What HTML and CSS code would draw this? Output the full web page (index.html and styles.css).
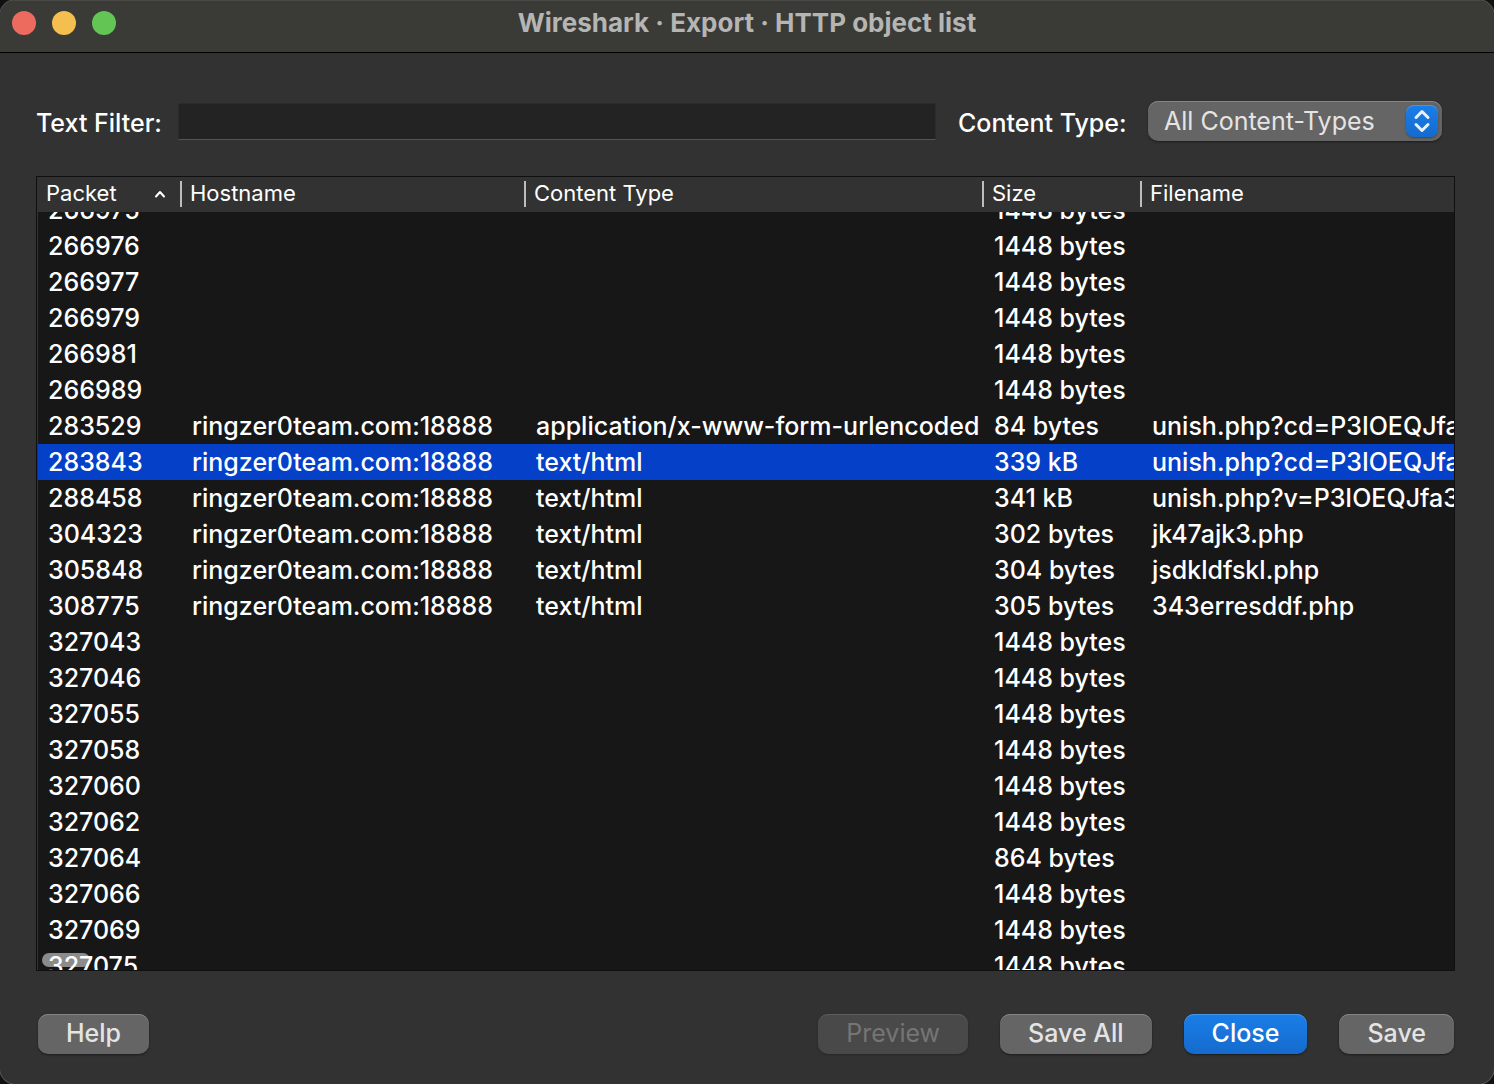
FILE: index.html
```
<!DOCTYPE html>
<html lang="en">
<head>
<meta charset="utf-8">
<title>Wireshark · Export · HTTP object list</title>
<link rel="stylesheet" href="styles.css">
</head>
<body>
<div class="window">
  <header class="titlebar">
    <div class="lights">
      <button class="light light-close" type="button" aria-label="Close window"></button>
      <button class="light light-min" type="button" aria-label="Minimize window"></button>
      <button class="light light-zoom" type="button" aria-label="Zoom window"></button>
    </div>
    <h1 class="title">Wireshark · Export · HTTP object list</h1>
  </header>
  <main class="content">
    <form class="filters">
      <label class="filter-label" for="text-filter">Text Filter:</label>
      <input class="filter-input" id="text-filter" type="text">
      <label class="type-label" for="content-type">Content Type:</label>
      <div class="select-wrap">
        <select class="select" id="content-type"><option>All Content-Types</option></select>
        <svg class="select-arrows" viewBox="0 0 32 32" aria-hidden="true">
          <path d="M10 12.500L16 6.500L22 12.500M10 19.500L16 25.500L22 19.500" fill="none" stroke="#e8f0fa" stroke-width="3" stroke-linecap="round" stroke-linejoin="round"/>
        </svg>
      </div>
    </form>
    <div class="list">
      <div class="scroller" id="scroller">
        <table class="objects">
          <colgroup><col class="col-packet"><col class="col-host"><col class="col-type"><col class="col-size"><col></colgroup>
          <thead>
            <tr>
              <th scope="col"><div class="head">Packet
                <svg class="sort" viewBox="0 0 12 8" aria-hidden="true"><path d="M2 6.500L6 2L10 6.500" fill="none" stroke="#fff" stroke-width="2" stroke-linecap="round" stroke-linejoin="round"/></svg></div></th>
              <th scope="col"><div class="head">Hostname</div></th>
              <th scope="col"><div class="head">Content Type</div></th>
              <th scope="col"><div class="head">Size</div></th>
              <th scope="col"><div class="head">Filename</div></th>
            </tr>
          </thead>
          <tbody>
            <tr><td>266975</td><td></td><td></td><td>1448 bytes</td><td></td></tr>
            <tr><td>266976</td><td></td><td></td><td>1448 bytes</td><td></td></tr>
            <tr><td>266977</td><td></td><td></td><td>1448 bytes</td><td></td></tr>
            <tr><td>266979</td><td></td><td></td><td>1448 bytes</td><td></td></tr>
            <tr><td>266981</td><td></td><td></td><td>1448 bytes</td><td></td></tr>
            <tr><td>266989</td><td></td><td></td><td>1448 bytes</td><td></td></tr>
            <tr><td>283529</td><td>ringzer0team.com:18888</td><td>application/x-www-form-urlencoded</td><td>84 bytes</td><td>unish.php?cd=P3IOEQJfa3</td></tr>
            <tr class="selected"><td>283843</td><td>ringzer0team.com:18888</td><td>text/html</td><td>339 kB</td><td>unish.php?cd=P3IOEQJfa3</td></tr>
            <tr><td>288458</td><td>ringzer0team.com:18888</td><td>text/html</td><td>341 kB</td><td>unish.php?v=P3IOEQJfa3</td></tr>
            <tr><td>304323</td><td>ringzer0team.com:18888</td><td>text/html</td><td>302 bytes</td><td>jk47ajk3.php</td></tr>
            <tr><td>305848</td><td>ringzer0team.com:18888</td><td>text/html</td><td>304 bytes</td><td>jsdkldfskl.php</td></tr>
            <tr><td>308775</td><td>ringzer0team.com:18888</td><td>text/html</td><td>305 bytes</td><td>343erresddf.php</td></tr>
            <tr><td>327043</td><td></td><td></td><td>1448 bytes</td><td></td></tr>
            <tr><td>327046</td><td></td><td></td><td>1448 bytes</td><td></td></tr>
            <tr><td>327055</td><td></td><td></td><td>1448 bytes</td><td></td></tr>
            <tr><td>327058</td><td></td><td></td><td>1448 bytes</td><td></td></tr>
            <tr><td>327060</td><td></td><td></td><td>1448 bytes</td><td></td></tr>
            <tr><td>327062</td><td></td><td></td><td>1448 bytes</td><td></td></tr>
            <tr><td>327064</td><td></td><td></td><td>864 bytes</td><td></td></tr>
            <tr><td>327066</td><td></td><td></td><td>1448 bytes</td><td></td></tr>
            <tr><td>327069</td><td></td><td></td><td>1448 bytes</td><td></td></tr>
            <tr><td>327075</td><td></td><td></td><td>1448 bytes</td><td></td></tr>
          </tbody>
        </table>
      </div>
      <div class="thumb"></div>
    </div>
    <footer class="actions">
      <button class="btn btn-help" type="button">Help</button>
      <button class="btn" type="button" disabled>Preview</button>
      <button class="btn" type="button">Save All</button>
      <button class="btn btn-primary" type="button">Close</button>
      <button class="btn" type="button">Save</button>
    </footer>
  </main>
</div>
<script src="list.js"></script>
</body>
</html>
```
FILE: list.js
```
document.getElementById("scroller").scrollTop = 20;
```
FILE: styles.css
```
* { box-sizing: border-box; }

body {
  margin: 0;
  background: #111;
  color: #fff;
  font-family: Inter, "Liberation Sans", sans-serif;
  font-size: 25px;
  font-weight: 500;
  line-height: 36px;
}

button, input, select { font: inherit; color: inherit; }

.window {
  display: flex;
  flex-direction: column;
  height: 100vh;
  overflow: hidden;
  border-radius: 16px;
  background: #323232;
  box-shadow: 0 0 0 1px #555;
}

.titlebar {
  display: grid;
  grid-template-columns: 1fr auto 1fr;
  align-items: center;
  height: 53px;
  padding: 0 12px 6px;
  border-bottom: 1px solid #000;
  background: #3a3a37;
  box-shadow: inset 0 1px #4a4a47;
}

.lights { display: flex; gap: 16px; }

.light {
  width: 24px;
  height: 24px;
  padding: 0;
  border: 0;
  border-radius: 50%;
}
.light-close { background: #ed6a5f; }
.light-min { background: #f5bf4f; }
.light-zoom { background: #62c554; }

.title {
  margin: 0;
  color: #b5b5b3;
  font-size: 26px;
  font-weight: 700;
  line-height: 36px;
}

.content {
  display: flex;
  flex: 1;
  flex-direction: column;
  min-height: 0;
  padding: 48px 39px 30px 36px;
}

.filters {
  display: flex;
  align-items: center;
  height: 40px;
  margin-right: 13px;
}
.filter-label, .type-label { flex: none; padding-top: 3px; }
.filter-label { width: 142px; }
.type-label { width: 190px; margin-left: 22px; }
.filter-input {
  flex: 1;
  min-width: 0;
  height: 37px;
  padding: 0 8px;
  border: 1px solid #2b2b2b;
  border-bottom-color: #555;
  background: #232323;
  outline: 0;
}

.select-wrap { position: relative; width: 294px; }
.select {
  display: block;
  width: 100%;
  height: 40px;
  padding: 0 40px 0 16px;
  border: 0;
  border-radius: 10px;
  appearance: none;
  background: #656565;
  color: #e4e4e4;
  font-weight: 400;
  box-shadow: inset 0 1px #858585, 0 1px 2px #1c1c1c;
}
.select-arrows {
  position: absolute;
  top: 4px;
  right: 4px;
  width: 32px;
  height: 32px;
  border-radius: 8px;
  background: linear-gradient(#1a7ee8, #156bcd);
  box-shadow: inset 0 1px #4796ec, 0 1px 2px #444;
  pointer-events: none;
}

.list {
  position: relative;
  flex: 1;
  min-height: 0;
  margin-top: 35px;
  border: 1px solid #101010;
  background: #171717;
}
.scroller {
  height: 100%;
  overflow: auto;
  border-left: 1px solid #323232;
  scrollbar-width: none;
}
.objects {
  width: 100%;
  border-collapse: separate;
  border-spacing: 0;
  table-layout: fixed;
}
.col-packet { width: 144px; }
.col-host { width: 344px; }
.col-type { width: 458px; }
.col-size { width: 158px; }

.objects th {
  position: sticky;
  top: 0;
  height: 35px;
  padding: 4px 0 5px;
  background: #323232;
  font-size: 22px;
  font-weight: 400;
  line-height: 24px;
  text-align: left;
  vertical-align: top;
}
.head {
  display: flex;
  align-items: center;
  justify-content: space-between;
  height: 26px;
  padding: 0 14px 2px 8px;
  border-right: 2px solid #bdbdbd;
}
.objects th:last-child .head { border-right: 0; }
.sort { width: 12px; height: 8px; margin-top: 2px; }

.objects td {
  height: 36px;
  padding: 0 0 0 10px;
  overflow: hidden;
  white-space: nowrap;
}
.selected { background: #0540c8; }

.thumb {
  position: absolute;
  bottom: 3px;
  left: 5px;
  width: 48px;
  height: 14px;
  border-radius: 7px;
  background: #fff;
  opacity: 0.5;
}

.actions {
  display: flex;
  gap: 32px;
  margin: 43px 1px 0 2px;
}
.btn {
  height: 40px;
  padding: 0 28px 2px;
  border: 0;
  border-radius: 10px;
  background: #656565;
  color: #e4e4e4;
  box-shadow: inset 0 1px #858585, 0 1px 2px #1c1c1c;
}
.btn-help { margin-right: auto; }
.btn:disabled {
  background: #494949;
  color: #757575;
  font-weight: 400;
  box-shadow: inset 0 1px #5c5c5c, 0 1px 2px #282828;
}
.btn-primary {
  background: linear-gradient(#1a7ee8, #156bcd);
  color: #fff;
  box-shadow: inset 0 1px #4796ec, 0 1px 2px #1c1c1c;
}
```
